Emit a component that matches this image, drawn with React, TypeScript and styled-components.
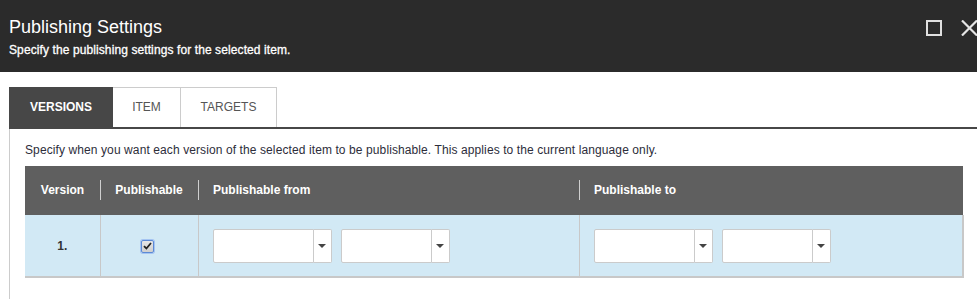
import React from "react";
import styled, { createGlobalStyle } from "styled-components";

const Global = createGlobalStyle`
  html, body { margin: 0; padding: 0; background: #fff; }
  body { font-family: "Liberation Sans", Arial, sans-serif; overflow: hidden; }
`;

const Page = styled.div`
  width: 977px;
  height: 299px;
  overflow: hidden;
`;

const Header = styled.header`
  height: 72px;
  background: #2b2b2b;
  color: #fff;
  display: flex;
  align-items: flex-start;
  justify-content: space-between;
  padding: 17px 0 0 9px;
  box-sizing: border-box;
`;

const Titles = styled.div`
  display: flex;
  flex-direction: column;
`;

const Title = styled.h1`
  margin: 0;
  font-size: 18px;
  line-height: 21px;
  font-weight: normal;
`;

const Subtitle = styled.p`
  margin: 5px 0 0;
  font-size: 12px;
  line-height: 14px;
  font-weight: normal;
  letter-spacing: 0.1px;
  -webkit-text-stroke: 0.3px #fff;
`;

const Controls = styled.div`
  display: flex;
  gap: 19px;
  padding-top: 3px;
  margin-right: -1px;
`;

const IconButton = styled.button`
  background: none;
  border: 0;
  padding: 0;
  width: 17px;
  height: 16px;
  display: flex;
  align-items: center;
  justify-content: center;
  cursor: pointer;
`;

const Body = styled.div`
  padding: 15px 0 0 9px;
`;

const TabBar = styled.div`
  display: flex;
  border-bottom: 2px solid #474747;
  height: 40px;
`;

const Tab = styled.div<{ $active?: boolean; $first?: boolean; $w: number }>`
  box-sizing: border-box;
  width: ${(p) => p.$w}px;
  height: 40px;
  display: flex;
  align-items: center;
  justify-content: center;
  padding-bottom: 1px;
  font-size: 12px;
  text-transform: uppercase;
  font-weight: ${(p) => (p.$active ? "bold" : "normal")};
  color: ${(p) => (p.$active ? "#fff" : "#555")};
  background: ${(p) => (p.$active ? "#474747" : "#fff")};
  border: 1px solid ${(p) => (p.$active ? "#474747" : "#ccc")};
  border-bottom: 0;
  border-left: ${(p) => (p.$first ? undefined : "0")};
`;

const Panel = styled.section`
  border-left: 1px solid #ccc;
  padding: 14px 0 0 15px;
  height: 200px;
`;

const Description = styled.p`
  margin: 0 0 9px;
  font-size: 12px;
  line-height: 14px;
  letter-spacing: 0.1px;
  color: #2d2d3a;
`;

const Table = styled.table`
  width: 938px;
  border-collapse: collapse;
  table-layout: fixed;
`;

const Th = styled.th<{ $align?: string; $sep?: boolean }>`
  height: 47px;
  padding: 0 0 2px ${(p) => (p.$align === "left" ? "15px" : "0")};
  background: #5f5f5f;
  color: #fff;
  font-size: 12px;
  font-weight: bold;
  text-align: ${(p) => p.$align || "center"};
  position: relative;
  &::before {
    content: "";
    display: ${(p) => (p.$sep ? "block" : "none")};
    position: absolute;
    left: 0;
    top: 14px;
    height: 20px;
    width: 1px;
    background: #cfcfcf;
  }
`;

const Tr = styled.tr`
  background: #d2e9f5;
`;

const Td = styled.td<{ $align?: string }>`
  height: 61px;
  padding: 0;
  border-left: 1px solid #c8c8c8;
  border-bottom: 2px solid #c8c8c8;
  text-align: ${(p) => p.$align || "center"};
  font-size: 12px;
  font-weight: bold;
  color: #333;
  &:first-child { border-left: 0; }
  &:last-child { border-right: 2px solid #c8c8c8; }
`;

const Check = styled.span`
  display: inline-flex;
  width: 11px;
  height: 11px;
  margin-right: 3px;
  border: 1px solid #5c8ad6;
  box-shadow: 0 0 0 1px #a4c4f2;
  border-radius: 2px;
  background: linear-gradient(#e6e6e6, #cfcfcf);
  align-items: center;
  justify-content: center;
  vertical-align: middle;
`;

const Pickers = styled.div`
  display: flex;
  gap: 9px;
  padding-left: 14px;
`;

const Combo = styled.div`
  display: flex;
  height: 34px;
`;

const Field = styled.div<{ $w: number }>`
  box-sizing: border-box;
  width: ${(p) => p.$w}px;
  height: 34px;
  background: #fff;
  border: 1px solid #cbcbcb;
  border-radius: 2px 0 0 2px;
`;

const Arrow = styled.div`
  box-sizing: border-box;
  width: 18px;
  height: 34px;
  background: #fff;
  border: 1px solid #cbcbcb;
  border-left: 0;
  border-radius: 0 2px 2px 0;
  display: flex;
  align-items: center;
  justify-content: center;
  &::after {
    content: "";
    border-left: 4px solid transparent;
    border-right: 4px solid transparent;
    border-top: 4px solid #444;
  }
`;

const DatePicker = () => (
  <Pickers>
    <Combo>
      <Field $w={101} />
      <Arrow />
    </Combo>
    <Combo>
      <Field $w={91} />
      <Arrow />
    </Combo>
  </Pickers>
);

export default function App() {
  return (
    <Page>
      <Global />
      <Header>
        <Titles>
          <Title>Publishing Settings</Title>
          <Subtitle>Specify the publishing settings for the selected item.</Subtitle>
        </Titles>
        <Controls>
          <IconButton aria-label="Maximize">
            <svg width="16" height="16" viewBox="0 0 16 16">
              <rect x="1" y="1" width="14" height="14" fill="none" stroke="#e0e0e0" strokeWidth="2" />
            </svg>
          </IconButton>
          <IconButton aria-label="Close">
            <svg width="17" height="16" viewBox="0 0 17 16">
              <path d="M1 0.5 L16 15.5 M16 0.5 L1 15.5" stroke="#e6e6e6" strokeWidth="2.2" />
            </svg>
          </IconButton>
        </Controls>
      </Header>
      <Body>
        <TabBar>
          <Tab $active $first $w={104}>Versions</Tab>
          <Tab $w={68}>Item</Tab>
          <Tab $w={96}>Targets</Tab>
        </TabBar>
        <Panel>
          <Description>
            Specify when you want each version of the selected item to be publishable. This applies to the current language only.
          </Description>
          <Table>
            <colgroup>
              <col style={{ width: 75 }} />
              <col style={{ width: 98 }} />
              <col style={{ width: 381 }} />
              <col style={{ width: 384 }} />
            </colgroup>
            <thead>
              <tr>
                <Th>Version</Th>
                <Th $sep>Publishable</Th>
                <Th $sep $align="left">Publishable from</Th>
                <Th $sep $align="left">Publishable to</Th>
              </tr>
            </thead>
            <tbody>
              <Tr>
                <Td>1.</Td>
                <Td>
                  <Check>
                    <svg width="9" height="8" viewBox="0 0 9 8">
                      <path d="M1 4.2 L3.4 6.5 L8 1" fill="none" stroke="#222" strokeWidth="1.8" />
                    </svg>
                  </Check>
                </Td>
                <Td $align="left"><DatePicker /></Td>
                <Td $align="left"><DatePicker /></Td>
              </Tr>
            </tbody>
          </Table>
        </Panel>
      </Body>
    </Page>
  );
}
